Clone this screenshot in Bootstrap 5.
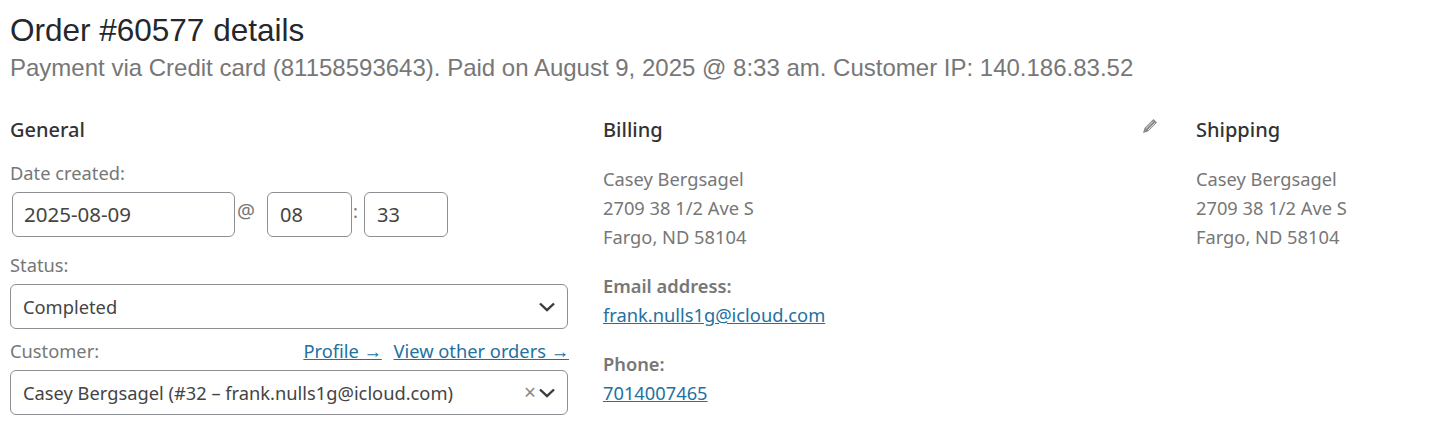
<!DOCTYPE html>
<html><head><meta charset="utf-8">
<link href="https://cdn.jsdelivr.net/npm/bootstrap@5.3.0/dist/css/bootstrap.min.css" rel="stylesheet">
<style>
html,body{background:#fff;height:442px;overflow:hidden}
body{font-family:"Noto Sans","Open Sans",sans-serif;font-size:18.3px;line-height:29px;color:#777}
.order-head{padding:12px 10px 0;font-family:"Liberation Sans",Arial,sans-serif}
.order-title{font-size:31.5px;line-height:36px;font-weight:400;color:#23282d;margin:0}
.order-meta{font-size:24px;line-height:30px;color:#777;margin:5px 0 0}
.cols{display:grid;grid-template-columns:558px 558px 229px;column-gap:35px;padding:33px 10px 0}
.col-title{font-size:20px;line-height:28px;font-weight:500;color:#333;margin:0}
.lbl{font-size:18.3px;line-height:26px;color:#777;margin:0 0 6px}
.lbl-first{margin-top:16px}
.lbl-status{margin-top:15px}
.lbl-customer{margin-top:9px}
.field{height:45px;border:1px solid #8c8f94;border-radius:6px;background:#fff;color:#444;font-size:18.3px;padding:0 12px;display:flex;align-items:center}
.field-date{width:223px;margin-left:2px;padding-left:11px;font-size:20.5px}
.field-hour{width:85px;margin-left:12px;font-size:20px}
.field-min{width:84px;margin-left:6px;font-size:20px}
.sep{font-size:20px;line-height:26px;color:#777;margin:6px 0 0 2px;width:18px}
.sep-colon{margin-left:1px;width:5px;font-size:18.3px}
.chev{margin-left:auto;flex:none;margin-right:0}
.clr{margin-left:auto;color:#888;font-size:21px;margin-right:3px}
.clr + .chev{margin-left:0}
a.lnk{color:#2271a1;text-decoration:underline}
.lnk-gap{margin-left:7px}
.lnk-wrap{margin-right:-1px}
.addr{margin:20px 0 0}
.addr-label{font-weight:600}
.addr-value{margin:0}
.pen{margin:2px 3px 0 0;flex:none}
</style></head><body>
<div class="order-head">
<h2 class="order-title">Order #60577 details</h2>
<p class="order-meta">Payment via Credit card (81158593643). Paid on August 9, 2025 @ 8:33 am. Customer IP: 140.186.83.52</p>
</div>
<div class="cols">
<div>
<h3 class="col-title">General</h3>
<p class="lbl lbl-first">Date created:</p>
<div class="d-flex">
<div class="field field-date">2025-08-09</div>
<span class="sep">@</span>
<div class="field field-hour">08</div>
<span class="sep sep-colon">:</span>
<div class="field field-min">33</div>
</div>
<p class="lbl lbl-status">Status:</p>
<div class="field">Completed<svg class="chev" width="16" height="10" viewBox="0 0 16 10"><path d="M1 1.5 8 8.2l7-6.7" fill="none" stroke="#3c3c3c" stroke-width="2.4"/></svg></div>
<div class="d-flex justify-content-between lbl lbl-customer"><span>Customer:</span><span class="lnk-wrap"><a class="lnk" href="#">Profile →</a> <a class="lnk lnk-gap" href="#">View other orders →</a></span></div>
<div class="field">Casey Bergsagel (#32 – frank.nulls1g@icloud.com)<span class="clr">×</span><svg class="chev" width="16" height="10" viewBox="0 0 16 10"><path d="M1 1.5 8 8.2l7-6.7" fill="none" stroke="#3c3c3c" stroke-width="2.4"/></svg></div>
</div>
<div>
<div class="d-flex justify-content-between"><h3 class="col-title">Billing</h3><svg class="pen" width="16" height="16" viewBox="0 0 16 16"><path d="M11.5 1 15 4.5 6 13.5 1 15l1.5-5z" fill="#8a8a8a"/><path d="M4 10.5 11 3.5M6 12 13 5" stroke="#fff" stroke-width=".7" fill="none"/></svg></div>
<p class="addr">Casey Bergsagel<br>2709 38 1/2 Ave S<br>Fargo, ND 58104</p>
<p class="addr addr-label">Email address:</p>
<p class="addr-value"><a class="lnk" href="#">frank.nulls1g@icloud.com</a></p>
<p class="addr addr-label">Phone:</p>
<p class="addr-value"><a class="lnk" href="#">7014007465</a></p>
</div>
<div>
<h3 class="col-title">Shipping</h3>
<p class="addr">Casey Bergsagel<br>2709 38 1/2 Ave S<br>Fargo, ND 58104</p>
</div>
</div>
<script src="https://cdn.jsdelivr.net/npm/bootstrap@5.3.0/dist/js/bootstrap.bundle.min.js"></script>
</body></html>
